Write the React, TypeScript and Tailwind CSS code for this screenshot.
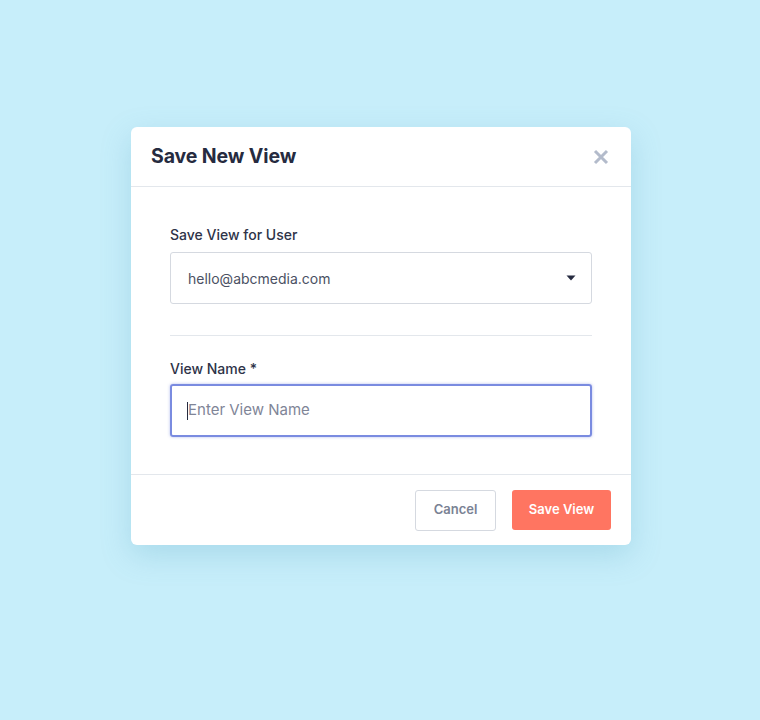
import React from "react";

export default function App() {
  return (
    <div
      className="w-[760px] h-[720px] bg-[#c7eefa] flex"
      style={{ fontFamily: "Inter, 'Noto Sans', sans-serif" }}
    >
      <div className="mt-[127px] ml-[131px] w-[500px] h-[418px] bg-white rounded-md shadow-[0_10px_30px_rgba(80,160,190,0.25)] flex flex-col">
        <div className="h-[60px] flex items-center justify-between pl-[20px] pr-[22px] border-b border-[#e3e7ec]">
          <h2 className="text-[19.5px] font-bold text-[#262b40] tracking-[-0.1px]">Save New View</h2>
          <svg width="16" height="16" viewBox="0 0 16 16" className="text-[#b3bbcb]">
            <path d="M2 2L14 14M14 2L2 14" stroke="currentColor" strokeWidth="3" strokeLinecap="butt" />
          </svg>
        </div>
        <div className="flex-1 px-[39px] pt-[39px] border-b border-[#e3e7ec]">
          <label className="block text-[14px] font-medium text-[#2e3348] leading-[18px]">Save View for User</label>
          <div className="mt-[8px] h-[52px] border border-[#d5d9e0] rounded-[3px] flex items-center justify-between pl-[17px] pr-[15px]">
            <span className="text-[14px] text-[#4b5163]">hello@abcmedia.com</span>
            <svg width="10" height="6" viewBox="0 0 10 6">
              <path d="M0.5 0.5H9.5L5 5.5Z" fill="#262b40" />
            </svg>
          </div>
          <div className="mt-[31px] border-t border-[#e3e7ec]" />
          <label className="block mt-[24px] text-[14px] font-medium text-[#2e3348] leading-[18px]">View Name *</label>
          <div className="mt-[6px] h-[53px] border-2 border-[#7a8be0] rounded-[3px] shadow-[0_0_3px_rgba(100,120,220,0.5)] flex items-center pl-[15px]">
            <span className="w-px h-[18px] bg-[#262b40]" />
            <span className="text-[15px] text-[#7f8597]">Enter View Name</span>
          </div>
        </div>
        <div className="h-[70px] flex items-center justify-end gap-[16px] pr-[20px]">
          <button className="w-[81px] h-[41px] border border-[#d5d9e0] rounded-[3px] text-[13px] font-semibold text-[#7a8294]">Cancel</button>
          <button className="w-[99px] h-[40px] bg-[#ff7561] rounded-[3px] text-[13px] font-semibold text-white">Save View</button>
        </div>
      </div>
    </div>
  );
}
